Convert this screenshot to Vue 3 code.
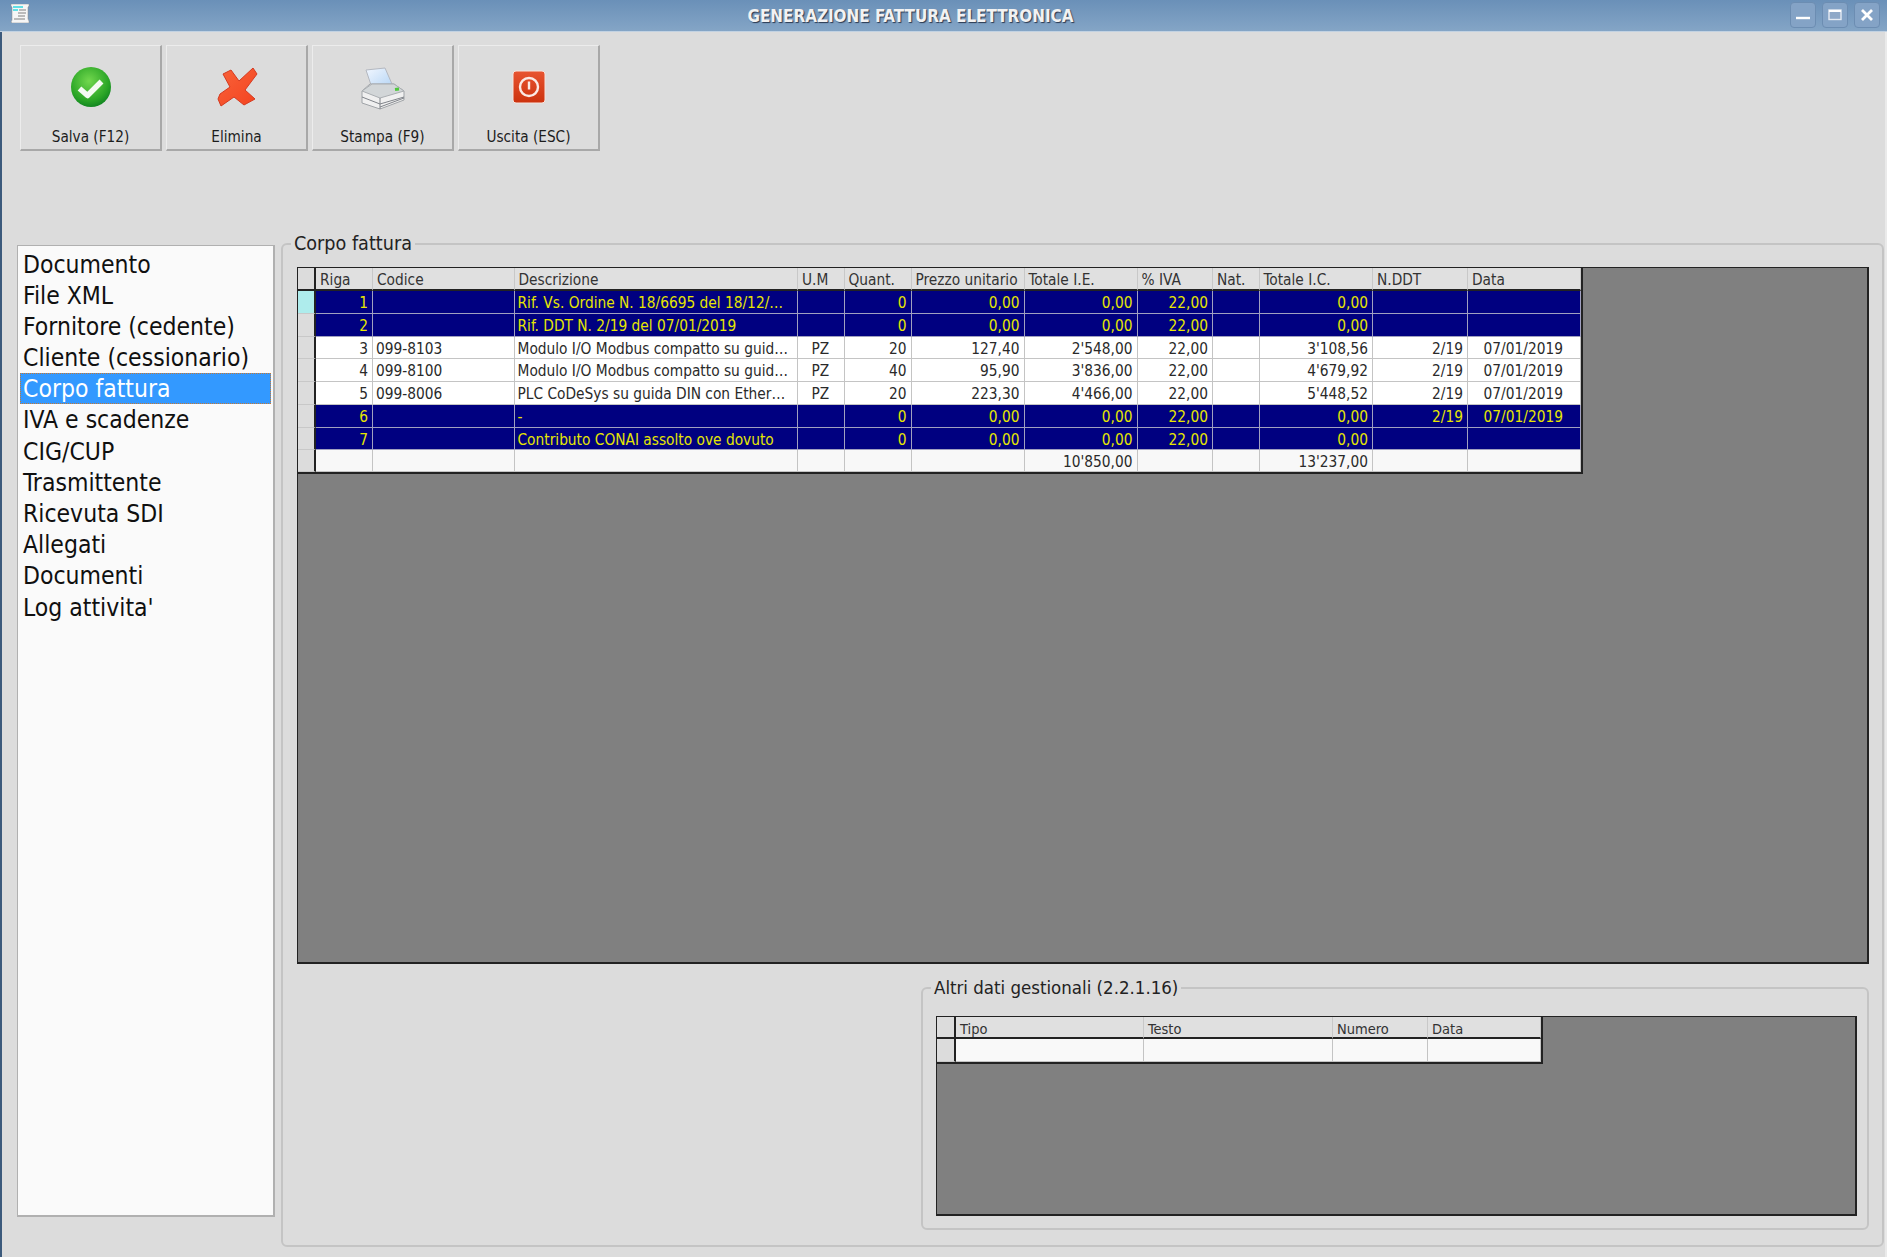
<script setup>
const menu = ['Documento','File XML','Fornitore (cedente)','Cliente (cessionario)','Corpo fattura','IVA e scadenze','CIG/CUP','Trasmittente','Ricevuta SDI','Allegati','Documenti',"Log attivita'"]
const heads = ['Riga','Codice','Descrizione','U.M','Quant.','Prezzo unitario','Totale I.E.','% IVA','Nat.','Totale I.C.','N.DDT','Data']
const aligns = ['r','l','l','c','r','r','r','r','l','r','r','c']
const rows = [
  { hi:true, cur:true, c:['1','','Rif. Vs. Ordine N. 18/6695 del 18/12/…','','0','0,00','0,00','22,00','','0,00','',''] },
  { hi:true, c:['2','','Rif. DDT N. 2/19 del 07/01/2019','','0','0,00','0,00','22,00','','0,00','',''] },
  { c:['3','099-8103','Modulo I/O Modbus compatto su guid…','PZ','20','127,40',"2'548,00",'22,00','',"3'108,56",'2/19','07/01/2019'] },
  { c:['4','099-8100','Modulo I/O Modbus compatto su guid…','PZ','40','95,90',"3'836,00",'22,00','',"4'679,92",'2/19','07/01/2019'] },
  { c:['5','099-8006','PLC CoDeSys su guida DIN con Ether…','PZ','20','223,30',"4'466,00",'22,00','',"5'448,52",'2/19','07/01/2019'] },
  { hi:true, c:['6','','-','','0','0,00','0,00','22,00','','0,00','2/19','07/01/2019'] },
  { hi:true, c:['7','','Contributo CONAI assolto ove dovuto','','0','0,00','0,00','22,00','','0,00','',''] },
  { total:true, c:['','','','','','',"10'850,00",'','',"13'237,00",'',''] },
]
const buttons = ['Salva (F12)','Elimina','Stampa (F9)','Uscita (ESC)']
</script>

<template>
  <div class="win">
    <header class="title">
      <svg class="appicon" width="20" height="19" viewBox="0 0 20 19">
        <path d="M1 0h18v2l-1 1v12l1 2v2H2l-1-1 1-2V3L1 2z" fill="#f6f6f6" stroke="#8a8a8a" stroke-width=".5"/>
        <path d="M3 3h10M3 6h5" stroke="#30d8e0" stroke-width="1.600"/>
        <path d="M9 6h7M8 9h8M8 12h7M4 15h11" stroke="#808080" stroke-width="1"/>
      </svg>
      <span class="title-text">GENERAZIONE FATTURA ELETTRONICA</span>
      <div class="caption">
        <span class="capbtn"><svg width="14" height="14" viewBox="0 0 14 14"><path d="M0 10h14" stroke="#fff" stroke-width="2.400"/></svg></span>
        <span class="capbtn"><svg width="14" height="14" viewBox="0 0 14 14"><rect x="1" y="2" width="12" height="9.500" fill="#8fa9c8" stroke="#e4eaf2" stroke-width="1.400"/><path d="M1 3h12" stroke="#fff" stroke-width="2"/></svg></span>
        <span class="capbtn"><svg width="14" height="14" viewBox="0 0 14 14"><path d="M2 2l10 10M12 2L2 12" stroke="#fff" stroke-width="2.800"/></svg></span>
      </div>
    </header>

    <div class="client">
      <div class="toolbar">
        <button v-for="(b, i) in buttons" :key="b" class="tbtn">
          <span class="ico">
            <svg v-if="i === 0" width="42" height="42" viewBox="0 0 42 42">
              <defs>
                <radialGradient id="gr" cx=".45" cy=".35" r=".7"><stop offset="0" stop-color="#72d84e"/><stop offset=".7" stop-color="#2aa526"/><stop offset="1" stop-color="#0c7e20"/></radialGradient>
              </defs>
              <circle cx="21" cy="21" r="20" fill="url(#gr)"/>
              <path d="M9.500 22.500l8 7 14-14" fill="none" stroke="#f4fbf2" stroke-width="5.500" stroke-linejoin="round"/>
            </svg>
            <svg v-else-if="i === 1" width="42" height="42" viewBox="-1 -1 42 42">
              <defs>
                <linearGradient id="xr" x1="0" y1="0" x2="1" y2="1"><stop offset="0" stop-color="#f8633a"/><stop offset="1" stop-color="#f4431f"/></linearGradient>
              </defs>
              <path d="M6 7L14 3l8 11L36 1l4 6L28 23l10 9-11 6-10-8L4 39l-3-7 2-5 10-7z" fill="url(#xr)" stroke="#d43a20" stroke-width="1" stroke-linejoin="round"/>
            </svg>
            <svg v-else-if="i === 2" width="44" height="44" viewBox="-1 -1 44 44">
              <defs>
                <linearGradient id="pp" x1="0" y1="0" x2="1" y2="1"><stop offset="0" stop-color="#f2f7ff"/><stop offset="1" stop-color="#b4d4f4"/></linearGradient>
              </defs>
              <path d="M4 3l19-2 7 16-20 4z" fill="url(#pp)" stroke="#b4b8c0"/>
              <path d="M0 24l8-7h24l10 7v9L18 42 0 36z" fill="#f0f0f0" stroke="#a0a4a8"/>
              <path d="M0 24l18 7 24-7-10-7H10z" fill="#d2d6d8" stroke="#aaaeb2"/>
              <path d="M18 31v11M0 30l18 7 24-7M18 40l24-9" fill="none" stroke="#80848a" stroke-width="1"/>
              <path d="M33 22.500l4-.5" stroke="#4ec83c" stroke-width="3"/>
            </svg>
            <svg v-else width="34" height="42" viewBox="0 -4 34 42">
              <defs>
                <linearGradient id="rd" x1="0" y1="0" x2="0" y2="1"><stop offset="0" stop-color="#e85430"/><stop offset="1" stop-color="#cc320e"/></linearGradient>
              </defs>
              <rect x="1" y="1" width="32" height="32" rx="3" fill="url(#rd)" stroke="#f6e4de" stroke-width="1"/>
              <circle cx="17" cy="17" r="9" fill="none" stroke="#fbe9e4" stroke-width="2.400"/>
              <path d="M17 11.500v8" stroke="#fbe9e4" stroke-width="2.400"/>
            </svg>
          </span>
          <span class="tlabel">{{ b }}</span>
        </button>
      </div>

      <div class="main">
        <ul class="list">
          <li v-for="m in menu" :key="m" :class="{ sel: m === 'Corpo fattura' }">{{ m }}</li>
        </ul>

        <section class="group outer">
          <span class="legend">Corpo fattura</span>
          <div class="gridbox bigbox">
            <div class="grid big">
              <div class="hc ind"></div>
              <div v-for="h in heads" :key="h" class="hc">{{ h }}</div>
              <template v-for="(r, ri) in rows" :key="ri">
                <div class="ic ind" :class="{ cur: r.cur }"></div>
                <div v-for="(c, ci) in r.c" :key="ci" class="cell" :class="[aligns[ci], { hi: r.hi, tot: r.total }]">{{ c }}</div>
              </template>
            </div>
          </div>

          <div class="lower">
            <section class="group inner">
              <span class="legend">Altri dati gestionali (2.2.1.16)</span>
              <div class="gridbox smallbox">
                <div class="grid small">
                  <div class="hc ind"></div>
                  <div class="hc">Tipo</div><div class="hc">Testo</div><div class="hc">Numero</div><div class="hc">Data</div>
                  <div class="ic ind"></div>
                  <div class="cell"></div><div class="cell"></div><div class="cell"></div><div class="cell"></div>
                </div>
              </div>
            </section>
          </div>
        </section>
      </div>
    </div>
  </div>
</template>

<style>
html, body { margin: 0; background: #dcdcdc; overflow: hidden; }
</style>

<style scoped>
.win { width: 1887px; height: 1257px; display: flex; flex-direction: column; background: #dcdcdc; font-family: "DejaVu Sans", "Noto Sans", sans-serif; font-stretch: condensed; color: #1c1c1c; box-sizing: border-box; overflow: hidden; }
.title { height: 32px; flex: none; display: flex; align-items: center; justify-content: center; position: relative; background: linear-gradient(#6a90b8, #84a5c6); border-bottom: 1px solid #c2d2e2; box-sizing: border-box; }
.appicon { position: absolute; left: 10px; top: 4px; }
.title-text { font-size: 16.900px; font-weight: 700; color: #f2f2f2; text-shadow: 1px 1px 1px #2a3850; margin-left: -66px; }
.caption { position: absolute; right: 7px; top: 2px; display: flex; gap: 6px; }
.capbtn { width: 26px; height: 26px; box-sizing: border-box; border: 1px solid #6c8db2; border-radius: 4px; background: #84a3c6; display: flex; align-items: center; justify-content: center; }
.client { flex: 1; display: flex; flex-direction: column; border-left: 2px solid #3c5a7c; border-right: 2px solid #eaeaea; min-height: 0; }
.toolbar { display: flex; gap: 4px; padding: 13px 0 0 18px; height: 106px; flex: none; }
.tbtn { width: 142px; height: 106px; padding: 0; box-sizing: border-box; background: #dcdcdc; border: 1px solid #ececec; border-right: 2px solid #a8a8a8; border-bottom: 2px solid #a8a8a8; display: flex; flex-direction: column; align-items: center; font: inherit; font-stretch: condensed; color: #1c1c1c; }
.ico { height: 62px; margin-top: 20px; display: flex; align-items: flex-start; justify-content: center; }
.tlabel { font-size: 15.200px; line-height: 18px; margin-top: 0; }
.main { flex: 1; display: flex; align-items: flex-start; min-height: 0; padding: 94px 0 10px 15px; gap: 6px; }
.list { width: 258px; height: 972px; flex: none; box-sizing: border-box; margin: 0; padding: 2.500px 2px; list-style: none; background: #fafafa; border: 1px solid #b0b0b0; border-right-width: 2px; border-bottom-width: 2px; font-size: 24.500px; color: #101010; }
.list li { height: 31.200px; line-height: 31px; padding-left: 3px; white-space: nowrap; }
.list li.sel { background: #3399ff; color: #fff; outline: 1px dotted #c87830; outline-offset: -1px; }
.group { position: relative; box-sizing: border-box; border: 2px solid #c4c4c4; border-radius: 6px; }
.outer { flex: 1; height: 1004px; margin-top: -2px; padding: 22px 13px 0 14px; display: flex; flex-direction: column; margin-right: 1px; }
.legend { position: absolute; top: -13px; left: 8px; background: #dcdcdc; padding: 0 3px; font-size: 19.600px; line-height: 24px; color: #222; white-space: nowrap; }
.gridbox { background: #808080; border: 1px solid #222; border-bottom-width: 2px; border-right-width: 2px; box-sizing: border-box; }
.bigbox { height: 697px; flex: none; }
.lower { display: flex; justify-content: flex-end; margin-top: 23px; }
.inner { width: 948px; height: 243px; padding: 27px 10px 0 13px; }
.inner .legend { font-size: 18.500px; }
.smallbox { height: 200px; }
.grid { display: inline-grid; vertical-align: top; font-size: 15.300px; border-right: 2px solid #222; border-bottom: 2px solid #222; }
.big { grid-template-columns: 18px 57px 141.500px 283.500px 46.500px 67px 113px 113px 75.500px 46.500px 113.500px 95px 112.500px; grid-template-rows: 23px repeat(7, 22.750px) 22px; }
.small { font-size: 14.500px; grid-template-columns: 19px 188px 189px 95px 113px; grid-template-rows: 22px 22.500px; }
.hc { background: #e0e0e0; border-right: 1px solid #c8c8c8; border-bottom: 2px solid #222; padding: 2px 3px 0 4px; box-sizing: border-box; line-height: 21px; white-space: nowrap; overflow: hidden; color: #333; }
.hc.ind { border-right: 2px solid #222; padding: 0; background: #dcdcdc; }
.ic.ind { background: #dcdcdc; border-right: 2px solid #222; border-bottom: 1px solid #c8c8c8; box-sizing: border-box; }
.ic.ind.cur { background: #aeecec; }
.cell { background: #fff; color: #2a2a2a; border-right: 1px solid #c4c4c4; border-bottom: 1px solid #c4c4c4; box-sizing: border-box; padding: 2px 4px 0 3px; line-height: 21px; white-space: nowrap; overflow: hidden; }
.cell.hi { background: #000080; color: #e6e600; border-color: #a0a0c0; }
.cell.tot { background: #f8f8f8; }
.small .cell { background: #f9f9f9; }
.r { text-align: right; }
.c { text-align: center; }
.l { text-align: left; }
</style>
